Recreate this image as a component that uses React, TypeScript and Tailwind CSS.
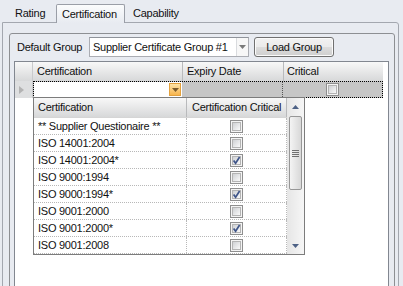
import React from 'react'

const items: [string, boolean][] = [
  ['** Supplier Questionaire **', false],
  ['ISO 14001:2004', false],
  ['ISO 14001:2004*', true],
  ['ISO 9000:1994', false],
  ['ISO 9000:1994*', true],
  ['ISO 9001:2000', false],
  ['ISO 9001:2000*', true],
  ['ISO 9001:2008', false],
]

const CheckBox = ({ checked }: { checked: boolean }) => (
  <span className="flex size-[13px] items-center justify-center border border-[#8f8f8f] bg-[#f4f4f4]">
    <span className="relative flex size-[9px] items-center justify-center border border-[#b4b4b4] bg-gradient-to-br from-[#cfd1d4] to-[#fafafa]">
      {checked && (
        <svg width="9" height="9" viewBox="0 0 9 9" className="absolute -top-[1px] -left-[1px]">
          <path d="M1.6 4.4 L3.6 7.2 L7.6 1" fill="none" stroke="#3f5589" strokeWidth="1.7" />
        </svg>
      )}
    </span>
  </span>
)

const Arrow = ({ up, color = '#4d6185' }: { up?: boolean; color?: string }) => (
  <svg width="7" height="4" viewBox="0 0 7 4">
    <path d={up ? 'M0 4 L3.5 0 L7 4 Z' : 'M0 0 L7 0 L3.5 4 Z'} fill={color} />
  </svg>
)

export default function App() {
  return (
    <div className="h-[286px] w-[403px] overflow-hidden bg-[#e8ebf1] font-['Liberation_Sans',Arial,sans-serif] text-[11px] tracking-[-0.25px] text-[#111]">
      {/* tabs */}
      <div className="flex h-[22px] items-end pl-[8px]">
        <div className="flex h-[17px] w-[48px] items-center pl-[7px]">Rating</div>
        <div className="relative z-10 -mb-px flex h-[19px] w-[69px] items-center rounded-t-[2px] border border-b-0 border-[#9a9ea7] bg-gradient-to-b from-[#fbfcfd] to-[#e8ebf1] pl-[5px]">
          Certification
        </div>
        <div className="flex h-[17px] items-center pl-[8px]">Capability</div>
      </div>

      {/* tab page */}
      <div className="ml-[2px] h-[300px] w-[397px] rounded-tr-[3px] border border-[#a3a7af] pt-[10px] pr-[3px] pl-[6px]">
        <div className="h-[300px] rounded-[3px] border border-[#8d8f93] pt-[3px] pr-[5px] pl-[4px]">
          <div className="flex h-[20px] items-center">
            <div className="w-[75px] pl-[3px]">Default Group</div>
            <div className="flex h-[20px] w-[160px] items-stretch border border-[#abadb3] border-t-[#8f939a] bg-white">
              <div className="flex flex-1 items-center pl-[3px]">Supplier Certificate Group #1</div>
              <div className="flex w-[12px] items-center justify-center border-l border-[#d9dbde] bg-[#f7f7f7]">
                <Arrow color="#7a7a7a" />
              </div>
            </div>
            <div className="ml-[5px] flex h-[20px] w-[80px] items-center justify-center rounded-[3px] border border-[#707070] bg-[linear-gradient(#f2f2f2,#ebebeb_50%,#dddddd_50%,#cfcfcf)] shadow-[inset_0_0_0_1px_#fbfbfb]">
              Load Group
            </div>
          </div>

          {/* grid */}
          <div className="relative mt-[4px] h-[260px] w-[375px] border border-[#828790] bg-white">
            <div className="flex h-[19px]">
              <div className="w-[18px] border-r border-[#c9cacc] bg-gradient-to-b from-[#f8f8f8] to-[#d7d8d9]" />
              <div className="flex w-[150px] items-center border-r border-[#b9babc] bg-gradient-to-b from-[#f8f8f8] to-[#d7d8d9] pl-[4px]">
                Certification
              </div>
              <div className="flex w-[101px] items-center border-r border-[#b9babc] bg-gradient-to-b from-[#f8f8f8] to-[#d7d8d9] pl-[4px]">
                Expiry Date
              </div>
              <div className="flex w-[99px] items-center bg-gradient-to-b from-[#f8f8f8] to-[#d7d8d9] pl-[3px]">Critical</div>
            </div>
            <div className="flex h-[17px]">
              <div className="flex w-[18px] items-center border-r border-[#c9cacc] bg-[#dedfe0] pl-[4px]">
                <svg width="5" height="8" viewBox="0 0 5 8">
                  <path d="M0 0 L5 4 L0 8 Z" fill="#b3b3b3" />
                </svg>
              </div>
              <div className="flex w-[350px] border border-dotted border-black bg-[#c6c6c6]">
                <div className="flex w-[148px] items-center justify-end bg-white pr-[1px]">
                  <div className="flex h-[13px] w-[12px] items-center justify-center border border-[#e3a13e] bg-gradient-to-b from-[#fde3a6] to-[#f7b54c]">
                    <Arrow color="#7b5b2c" />
                  </div>
                </div>
                <div className="w-[101px] border-r border-dotted border-[#555]" />
                <div className="flex flex-1 items-center justify-center">
                  <CheckBox checked={false} />
                </div>
              </div>
            </div>

            {/* dropdown list */}
            <div className="absolute top-[35px] left-[18px] z-20 flex h-[158px] w-[272px] border border-[#7c7c7c] bg-white">
              <div className="flex w-[253px] flex-col">
                <div className="flex h-[20px] border-b border-[#d5d5d5]">
                  <div className="flex w-[153px] items-center border-r border-[#b9babc] bg-gradient-to-b from-[#f8f8f8] to-[#d7d8d9] pl-[4px]">
                    Certification
                  </div>
                  <div className="flex w-[100px] items-center border-r border-[#b9babc] bg-gradient-to-b from-[#f8f8f8] to-[#d7d8d9] pl-[5px]">
                    Certification Critical
                  </div>
                </div>
                {items.map(([name, checked]) => (
                  <div key={name} className="flex h-[17px] border-b border-dotted border-[#b8b8b8]">
                    <div className="flex w-[153px] items-center border-r border-dotted border-[#b8b8b8] pl-[4px]">{name}</div>
                    <div className="flex w-[100px] items-center justify-center border-r border-dotted border-[#b8b8b8]">
                      <CheckBox checked={checked} />
                    </div>
                  </div>
                ))}
              </div>
              <div className="flex w-[17px] flex-col bg-gradient-to-r from-[#e6e6e6] to-[#f6f6f6]">
                <div className="flex h-[18px] items-center justify-center">
                  <Arrow up />
                </div>
                <div className="mx-[2px] flex h-[74px] flex-col items-center justify-center gap-[1px] rounded-[2px] border border-[#979797] bg-gradient-to-r from-[#f4f4f4] to-[#d8d8d8]">
                  <span className="h-px w-[7px] bg-[#6f6f6f]" />
                  <span className="h-px w-[7px] bg-[#6f6f6f]" />
                  <span className="h-px w-[7px] bg-[#6f6f6f]" />
                  <span className="h-px w-[7px] bg-[#6f6f6f]" />
                </div>
                <div className="flex-1" />
                <div className="flex h-[17px] items-center justify-center">
                  <Arrow />
                </div>
              </div>
            </div>
          </div>
        </div>
      </div>
    </div>
  )
}
